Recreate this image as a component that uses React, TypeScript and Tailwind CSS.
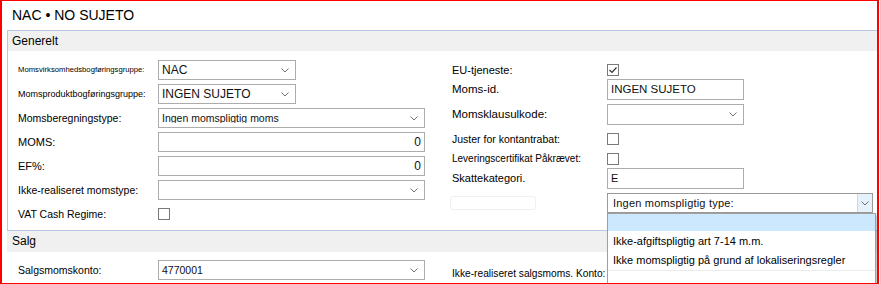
import React from 'react';

const font = { fontFamily: '"Liberation Sans", Arial, sans-serif' };

function Chevron() {
  return (
    <svg width="8" height="5" viewBox="0 0 8 5" className="shrink-0">
      <polyline points="0.5,0.5 4,4 7.5,0.5" fill="none" stroke="#707070" strokeWidth="1" />
    </svg>
  );
}

function Select({ value = '', width, text = 'text-[11px]' }: { value?: string; width: string; text?: string }) {
  return (
    <div className={`${width} h-[20px] border border-[#acacac] bg-white flex items-center pl-[3px] pr-[6px]`}>
      <span className={`flex-1 ${text} text-[#111] leading-none truncate`}>{value}</span>
      <Chevron />
    </div>
  );
}

function Input({ value = '', width, align = 'left', text = 'text-[11px]' }: { value?: string; width: string; align?: 'left' | 'right'; text?: string }) {
  return (
    <div
      className={`${width} h-[20px] border border-[#acacac] bg-white flex items-center px-[3px] ${
        align === 'right' ? 'justify-end' : ''
      }`}
    >
      <span className={`${text} text-[#111] leading-none`}>{value}</span>
    </div>
  );
}

function Checkbox({ checked = false }: { checked?: boolean }) {
  return (
    <div className="w-[12px] h-[12px] border border-[#7a7a7a] bg-white flex items-center justify-center">
      {checked && (
        <svg width="10" height="10" viewBox="0 0 10 10">
          <polyline points="1.5,5 4,7.5 8.5,2.5" fill="none" stroke="#333" strokeWidth="1.2" />
        </svg>
      )}
    </div>
  );
}

function Row({ label, labelClass = 'text-[10.5px]', children }: { label: string; labelClass?: string; children: React.ReactNode }) {
  return (
    <div className="flex items-center h-[20px]">
      <div className={`w-[140px] ${labelClass} text-black leading-none whitespace-nowrap`}>{label}</div>
      {children}
    </div>
  );
}

function RightRow({ label, labelClass = 'text-[11px]', className = '', children }: { label: string; labelClass?: string; className?: string; children?: React.ReactNode }) {
  return (
    <div className={`flex items-center h-[20px] ${className}`}>
      <div className={`w-[155px] ${labelClass} text-black leading-none whitespace-nowrap`}>{label}</div>
      {children}
    </div>
  );
}

export default function App() {
  return (
    <div
      className="w-[879px] h-[284px] bg-white border-[#ff0000] border-l-2 border-r-2 border-t border-b overflow-hidden"
      style={font}
    >
      <div className="h-[29px] pl-[10px] pt-[6px] text-[14px] leading-[16px] text-black">NAC • NO SUJETO</div>

      {/* Generelt */}
      <div className="ml-[5px] border-l border-t border-b border-[#b7c7e8]">
        <div className="h-[20px] bg-[#f0f0f0] pl-[4px] text-[12px] leading-[20px] text-black">Generelt</div>
        <div className="h-[179px] flex pl-[10px] pt-[9px]">
          <div className="w-[434px] flex flex-col gap-[4px]">
            <Row label="Momsvirksomhedsbogføringsgruppe:" labelClass="text-[7.7px]">
              <Select value="NAC" width="w-[138px]" text="text-[12px]" />
            </Row>
            <Row label="Momsproduktbogføringsgruppe:" labelClass="text-[9px]">
              <Select value="INGEN SUJETO" width="w-[138px]" text="text-[12px]" />
            </Row>
            <Row label="Momsberegningstype:">
              <Select value="Ingen momspligtig moms" width="w-[267px]" text="text-[10.5px]" />
            </Row>
            <Row label="MOMS:" labelClass="text-[11px]">
              <Input value="0" width="w-[267px]" align="right" text="text-[12px]" />
            </Row>
            <Row label="EF%:" labelClass="text-[11px]">
              <Input value="0" width="w-[267px]" align="right" text="text-[12px]" />
            </Row>
            <Row label="Ikke-realiseret momstype:">
              <Select width="w-[267px]" />
            </Row>
            <Row label="VAT Cash Regime:" labelClass="text-[10.5px]">
              <Checkbox />
            </Row>
          </div>

          <div className="flex-1 flex flex-col">
            <RightRow label="EU-tjeneste:" labelClass="text-[11px]">
              <Checkbox checked />
            </RightRow>
            <RightRow label="Moms-id." labelClass="text-[11.5px]" className="mt-[-1px] h-[21px]">
              <Input value="INGEN SUJETO" width="w-[137px] !h-[21px]" text="text-[11.5px]" />
            </RightRow>
            <RightRow label="Momsklausulkode:" labelClass="text-[11.5px]" className="mt-[4px] h-[21px]">
              <Select width="w-[137px] !h-[21px]" />
            </RightRow>
            <RightRow label="Juster for kontantrabat:" labelClass="text-[10.5px]" className="mt-[4px]">
              <Checkbox />
            </RightRow>
            <RightRow label="Leveringscertifikat Påkrævet:" labelClass="text-[10px]">
              <Checkbox />
            </RightRow>
            <RightRow label="Skattekategori." labelClass="text-[11px]" className="mt-[-1px] h-[21px]">
              <Input value="E" width="w-[137px] !h-[21px]" />
            </RightRow>
            <div className="flex items-center h-[20px] mt-[4px]">
              <div className="w-[155px] flex items-center">
                <div className="ml-[-2px] w-[86px] h-[14px] border border-[#f0f0f0] rounded-[3px]" />
              </div>
              <div className="relative z-10">
                <div className="w-[266px] h-[20px] border border-[#9a9a9a] bg-white flex items-center">
                  <span className="flex-1 pl-[5px] text-[11px] leading-none text-[#111] tracking-[0.2px]">Ingen momspligtig type:</span>
                  <div className="w-[15px] h-[18px] bg-[#e5f1fb] border-l border-[#c4dcf0] flex items-center justify-center">
                    <Chevron />
                  </div>
                </div>
                <div className="absolute left-0 top-[20px] w-[269px] h-[80px] bg-white border border-[#a0a0a0] shadow-[2px_2px_3px_rgba(0,0,0,0.25)]">
                  <div className="h-[17px] bg-[#cce8ff]" />
                  <div className="h-[19px] mt-[1px] pl-[5px] flex items-center text-[11px] leading-none text-black">
                    Ikke-afgiftspligtig art 7-14 m.m.
                  </div>
                  <div className="h-[18px] pl-[5px] flex items-center text-[11px] leading-none text-black">
                    Ikke momspligtig på grund af lokaliseringsregler
                  </div>
                  <div className="h-[1px] bg-[#ececec] mt-[1px]" />
                </div>
              </div>
            </div>
          </div>
        </div>
      </div>

      {/* Salg */}
      <div className="ml-[5px] h-[21px] bg-[#f0f0f0] pl-[5px] text-[12px] leading-[21px] text-black">Salg</div>
      <div className="flex pl-[16px] pt-[8px]">
        <div className="w-[434px]">
          <Row label="Salgsmomskonto:" labelClass="text-[10.5px]">
            <Select value="4770001" width="w-[267px]" text="text-[10.5px]" />
          </Row>
        </div>
        <div className="relative z-20 flex items-end h-[20px] pb-[1px] text-[10.2px] leading-none text-black whitespace-nowrap">
          Ikke-realiseret salgsmoms. Konto:
        </div>
      </div>
    </div>
  );
}
